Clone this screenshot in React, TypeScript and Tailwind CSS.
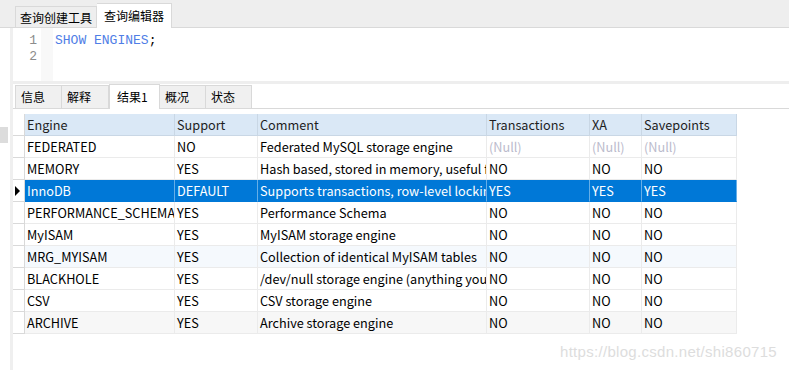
const rows: (string | null)[][] = [
  ["FEDERATED", "NO", "Federated MySQL storage engine", null, null, null],
  ["MEMORY", "YES", "Hash based, stored in memory, useful for temporary tables", "NO", "NO", "NO"],
  ["InnoDB", "DEFAULT", "Supports transactions, row-level locking, and foreign keys", "YES", "YES", "YES"],
  ["PERFORMANCE_SCHEMA", "YES", "Performance Schema", "NO", "NO", "NO"],
  ["MyISAM", "YES", "MyISAM storage engine", "NO", "NO", "NO"],
  ["MRG_MYISAM", "YES", "Collection of identical MyISAM tables", "NO", "NO", "NO"],
  ["BLACKHOLE", "YES", "/dev/null storage engine (anything you write to it disappears)", "NO", "NO", "NO"],
  ["CSV", "YES", "CSV storage engine", "NO", "NO", "NO"],
  ["ARCHIVE", "YES", "Archive storage engine", "NO", "NO", "NO"],
];

const headers = ["Engine", "Support", "Comment", "Transactions", "XA", "Savepoints"];

const gridCols = "grid grid-cols-[12px_150px_83px_229px_103px_52px_95px]";

const resultTabs = [
  { label: "信息", w: "w-[47px]" },
  { label: "解释", w: "w-[47px]" },
  { label: "结果1", w: "w-[51px]", active: true },
  { label: "概况", w: "w-[46px]" },
  { label: "状态", w: "w-[46px]" },
];

export default function App() {
  return (
    <div
      className="relative w-[789px] h-[370px] overflow-hidden bg-white text-black flex flex-col"
      style={{ fontFamily: '"Noto Sans CJK SC", "Noto Sans", sans-serif' }}
    >
      {/* editor tabs */}
      <div className="h-[28px] bg-[#eeeeee] border-b border-[#d9d9d9] flex items-end pl-[15px] text-[12px]">
        <div className="w-[82px] h-[22px] mb-[-1px] border border-b-0 border-[#d9d9d9] flex items-center justify-center">
          查询创建工具
        </div>
        <div className="w-[75px] h-[25px] mb-[-1px] bg-white border border-l-0 border-b-0 border-[#d9d9d9] flex items-center justify-center">
          查询编辑器
        </div>
      </div>

      <div className="flex flex-1">
        <div className="w-[10px] pt-[99px]">
          <div className="w-[8px] h-[16px] bg-[#dcdcdc]" />
        </div>
        <div className="w-[3px] bg-[#efefef]" />

        <div className="flex-1 flex flex-col">
          {/* editor */}
          <div className="h-[53px] flex font-['Liberation_Mono',monospace] text-[13px] leading-[16px]">
            <div className="w-[28px] pt-[5px] pr-[4px] text-right text-[#8c8c8c]">
              <div>1</div>
              <div>2</div>
            </div>
            <div className="w-[12px] bg-[#f8f8f8]" />
            <div className="pt-[5px] pl-[2px]">
              <span className="text-[#4f7ee6]">SHOW ENGINES</span>
              <span>;</span>
            </div>
          </div>
          <div className="h-[3px] bg-[#eeeeee]" />

          {/* result tabs */}
          <div className="h-[25px] border-b border-[#d9d9d9] flex items-end pl-[2px] text-[12px]">
            {resultTabs.map((t) => (
              <div
                key={t.label}
                className={
                  t.active
                    ? `${t.w} h-[25px] mb-[-1px] bg-white border border-b-0 border-[#d9d9d9] pl-[7px] flex items-center`
                    : `${t.w} h-[23px] bg-[#f0f0f0] border border-l-0 first:border-l border-b-0 border-[#d9d9d9] pl-[5px] flex items-center`
                }
              >
                {t.label}
              </div>
            ))}
          </div>

          {/* grid */}
          <div className="mt-[5px] text-[12.7px]">
            <div className={`${gridCols} h-[22px]`}>
              <div className="border-r border-b border-[#d9d9d9] bg-white" />
              {headers.map((h) => (
                <div
                  key={h}
                  className="bg-[#dae8f6] border-r border-b border-[#c9d7e5] pl-[2px] pt-[1px] flex items-center text-[#1e1e1e] whitespace-nowrap overflow-hidden"
                >
                  {h}
                </div>
              ))}
            </div>
            {rows.map((r, i) => {
              const selected = i === 2;
              const bg = selected
                ? "bg-[#0078d7] text-white border-[#0078d7]"
                : i === 5
                ? "bg-[#f5f9fd] border-[#ebebeb]"
                : i === 8
                ? "bg-[#f7f7f7] border-[#ebebeb]"
                : "bg-white border-[#ebebeb]";
              return (
                <div key={i} className={`${gridCols} h-[22px]`}>
                  <div className="border-r border-b border-[#d9d9d9] bg-white flex items-center pl-[1px]">
                    {selected && (
                      <svg width="7" height="10" viewBox="0 0 7 10">
                        <path d="M1 0 L6 5 L1 10 Z" fill="#000" />
                      </svg>
                    )}
                  </div>
                  {r.map((c, j) => (
                    <div
                      key={j}
                      className={`${bg} border-r border-b ${selected ? "border-r-[#ffffff66]" : ""} pl-[2px] pt-[1px] flex items-center whitespace-nowrap overflow-hidden`}
                    >
                      {c === null ? <span className="text-[#bbbbcc]">(Null)</span> : c}
                    </div>
                  ))}
                </div>
              );
            })}
          </div>
        </div>
      </div>

      <div className="absolute left-[560px] top-[341px] text-[15px] text-[#dddddd] font-['Liberation_Sans',sans-serif] tracking-[0.3px]">
        https://blog.csdn.net/shi860715
      </div>
    </div>
  );
}
